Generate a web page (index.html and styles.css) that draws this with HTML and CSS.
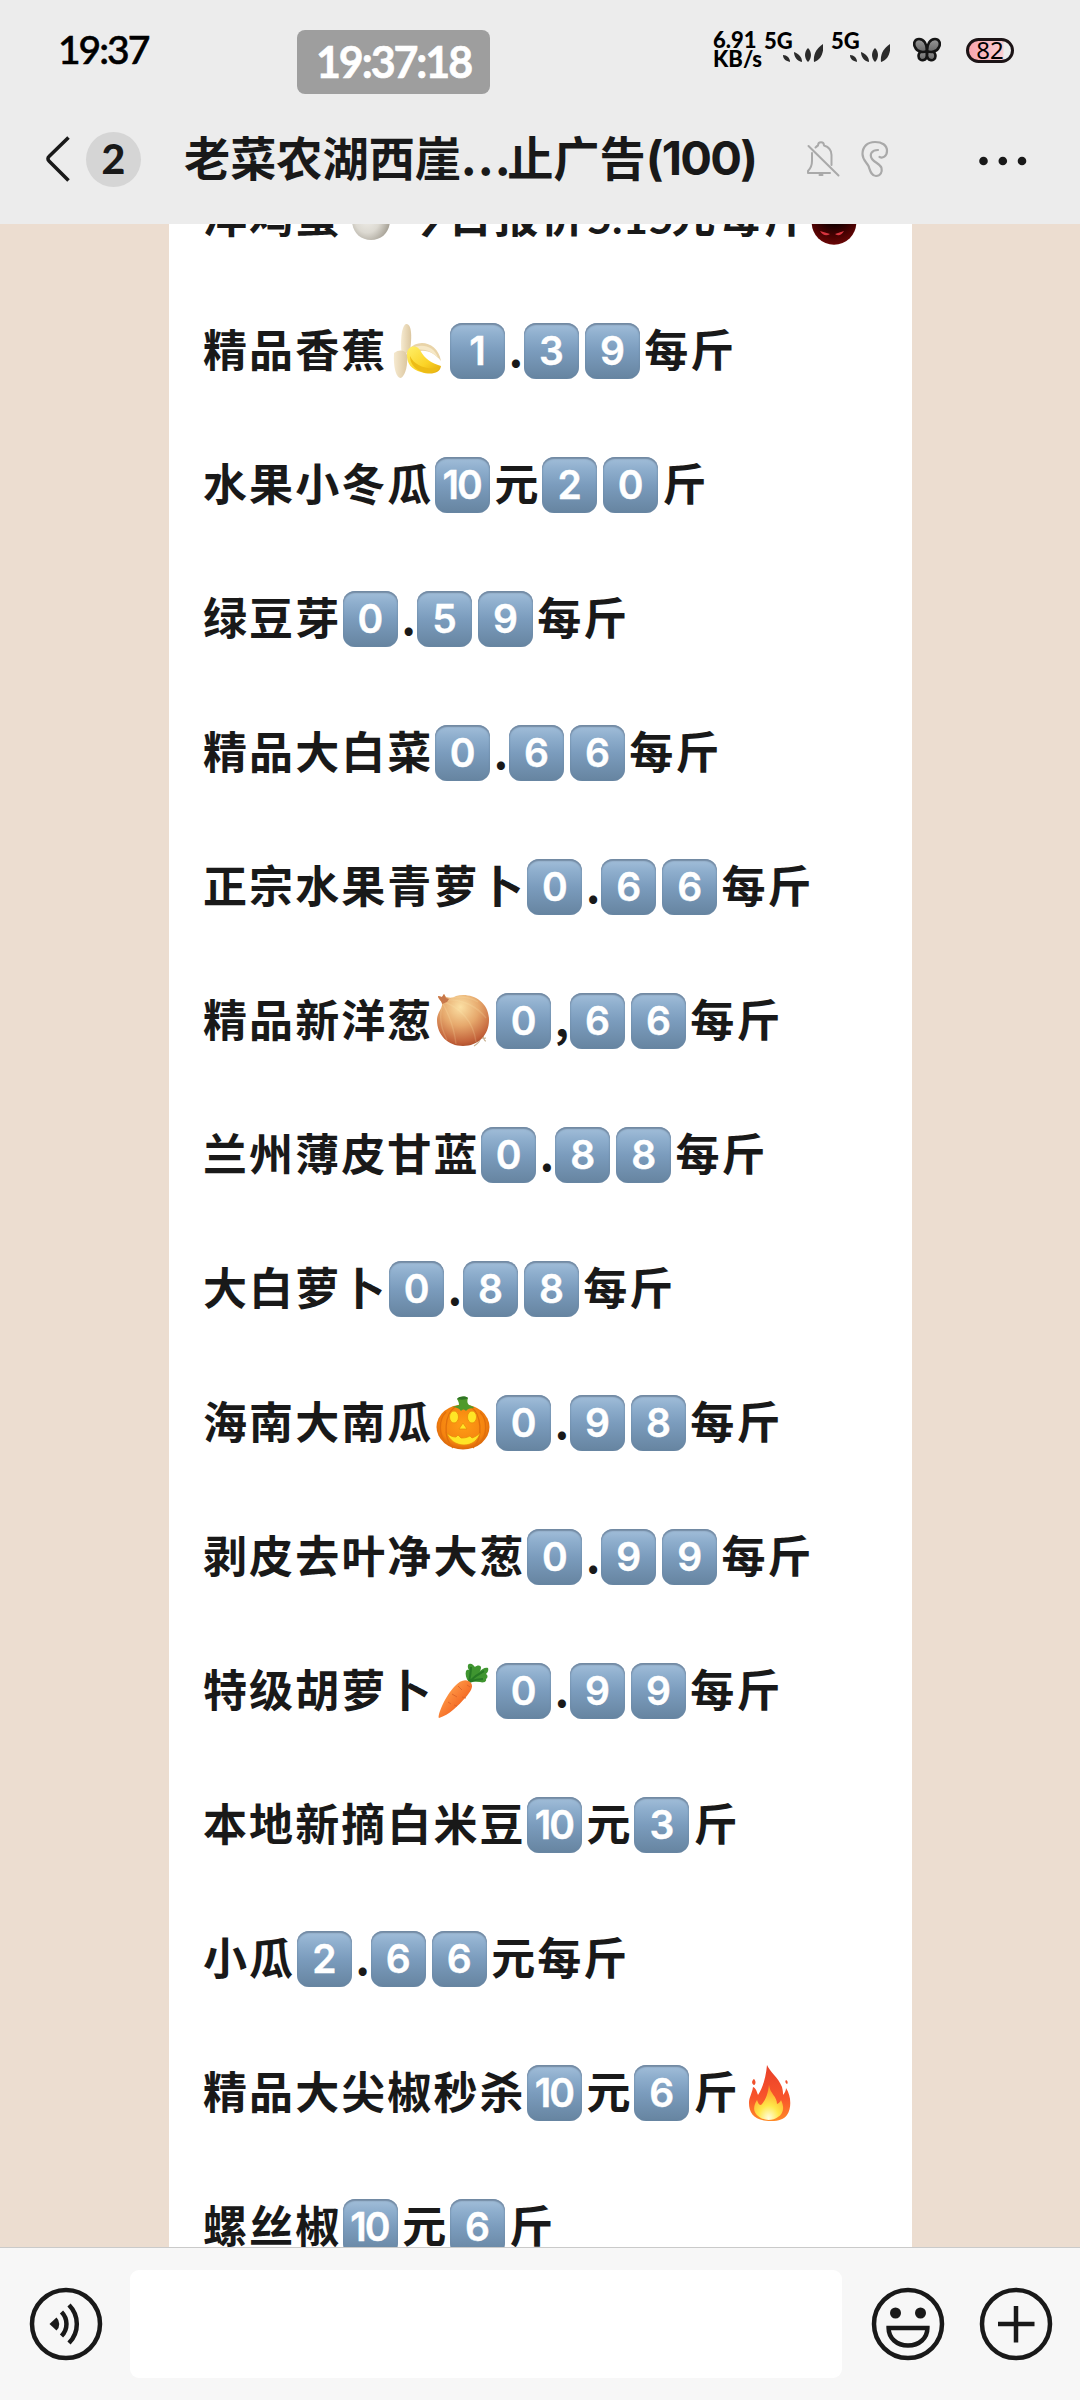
FILE: index.html
```html
<!DOCTYPE html>
<html lang="zh-CN">
<head>
    <meta charset="UTF-8">
    <meta name="viewport" content="width=device-width, initial-scale=1.0">
    <title>老菜农湖西崖</title>
    <link rel="stylesheet" href="styles.css">
</head>
<body>
    <!-- Shared shapes -->
    <svg class="defs" width="0" height="0">
        <defs>
            <linearGradient id="bananaFill" x1="0" y1="0" x2="1" y2="1">
                <stop offset="0" stop-color="#fff06a"/>
                <stop offset="0.6" stop-color="#fbd326"/>
                <stop offset="1" stop-color="#e0a70c"/>
            </linearGradient>
            <linearGradient id="peelFill" x1="0" y1="0" x2="1" y2="0">
                <stop offset="0" stop-color="#f6ead0"/>
                <stop offset="1" stop-color="#dcc7a0"/>
            </linearGradient>
            <radialGradient id="onionFill" cx="0.45" cy="0.25" r="0.8">
                <stop offset="0" stop-color="#fbe0a4"/>
                <stop offset="0.45" stop-color="#e6a86c"/>
                <stop offset="0.85" stop-color="#c3623a"/>
                <stop offset="1" stop-color="#a34826"/>
            </radialGradient>
            <radialGradient id="pumpkinFill" cx="0.5" cy="0.45" r="0.6">
                <stop offset="0" stop-color="#ff9d15"/>
                <stop offset="0.7" stop-color="#f58410"/>
                <stop offset="1" stop-color="#cf5a08"/>
            </radialGradient>
            <linearGradient id="carrotFill" x1="0" y1="0" x2="1" y2="1">
                <stop offset="0.2" stop-color="#ffa04c"/>
                <stop offset="0.6" stop-color="#f6712a"/>
                <stop offset="1" stop-color="#dc4f12"/>
            </linearGradient>
            <linearGradient id="fireFill" x1="0" y1="0" x2="0" y2="1">
                <stop offset="0" stop-color="#e8402a"/>
                <stop offset="0.6" stop-color="#f9552b"/>
                <stop offset="1" stop-color="#ff8a26"/>
            </linearGradient>
            <radialGradient id="flameFill" cx="0.5" cy="0.95" r="0.8">
                <stop offset="0" stop-color="#fffde0"/>
                <stop offset="0.45" stop-color="#ffe84a"/>
                <stop offset="1" stop-color="#ffa52c"/>
            </radialGradient>
            <radialGradient id="eggFill" cx="0.4" cy="0.5" r="0.6">
                <stop offset="0" stop-color="#f4f2ee"/>
                <stop offset="0.6" stop-color="#dcd9d1"/>
                <stop offset="1" stop-color="#aaa59a"/>
            </radialGradient>
            <radialGradient id="devilFill" cx="0.5" cy="0.3" r="0.7">
                <stop offset="0.3" stop-color="#120000"/>
                <stop offset="0.75" stop-color="#4c0202"/>
                <stop offset="1" stop-color="#6b0606"/>
            </radialGradient>
            <linearGradient id="wingFill" x1="0" y1="0" x2="0" y2="1">
                <stop offset="0" stop-color="#999999"/>
                <stop offset="1" stop-color="#666666"/>
            </linearGradient>
            <symbol id="leaves" viewBox="0 0 40 18">
                <g fill="#2b2b2b">
                    <path d="M0 11c4 0 7 3 7 7-4-1-7-3-7-7z"/>
                    <path d="M11 8c5 2 8 5 8 10-5-1-8-5-8-10z"/>
                    <path d="M25 4c4 4 4 10 0 14-4-4-4-10 0-14z"/>
                    <path d="M40 0c1 9-2 16-9 18-1-8 3-14 9-18z"/>
                </g>
            </symbol>
        </defs>
    </svg>

    <header class="header">
        <div class="status">
            <span class="status-time">19:37</span>
            <span class="clock">19:37:18</span>
            <div class="status-right">
                <div class="speed"><span>6.91</span><span>KB/s</span></div>
                <div class="signal"><span>5G</span><svg class="leaves" width="40" height="18"><use href="#leaves"/></svg></div>
                <div class="signal"><span>5G</span><svg class="leaves" width="40" height="18"><use href="#leaves"/></svg></div>
                <svg class="butterfly" width="28" height="25" viewBox="0 0 28 25">
                    <g fill="url(#wingFill)" stroke="#151515" stroke-width="2.6" stroke-linejoin="round">
                        <path d="M13.500 13c-4 0-8 2-8 6 0 3 3 5 5 4 2 0 3-2 3.500-4z"/>
                        <path d="M14.500 13c4 0 8 2 8 6 0 3-3 5-5 4-2 0-3-2-3.500-4z"/>
                        <path d="M14 14c0-7-3-12-8-12-4 0-6 4-4 8 2 5 8 6 12 4z"/>
                        <path d="M14 14c0-7 3-12 8-12 4 0 6 4 4 8-2 5-8 6-12 4z"/>
                    </g>
                </svg>
                <div class="battery">82</div>
            </div>
        </div>
        <div class="titlebar">
            <svg class="back" width="26" height="48" viewBox="0 0 26 48">
                <path d="M23.500 2.500L4 21.500a3 3 0 0 0 0 4.500L23.500 45.500" fill="none" stroke="#191919" stroke-width="3.600"/>
            </svg>
            <span class="unread">2</span>
            <h1 class="title">老菜农湖西崖<span class="dots">...</span>止广告<span class="count">(100)</span></h1>
            <svg class="bell" width="34" height="38" viewBox="0 0 34 38">
                <g fill="none" stroke="#a9a9a9" stroke-width="2" stroke-linecap="round" stroke-linejoin="round">
                    <path d="M6 13v8c0 5-1 7-4 10v2h22"/>
                    <path d="M9.500 7.500C11 6 11 6 12 5.500 12 1 18 1 18 5.500c5 1.500 7.500 5 7.500 9.500v10"/>
                    <path d="M2.500 6L32.500 35.500"/>
                    <path d="M13.500 35h3"/>
                </g>
            </svg>
            <svg class="ear" width="28" height="38" viewBox="0 0 28 38">
                <path d="M18.500 17c3 1.500 7.500-.5 7.500-6C26 5 21 2 14 2 6 2 1.500 7 1.500 14c0 6 4 8 6 12 1.500 4 2.500 10 7.500 10 4.500 0 6.500-4 5.500-8C19.500 24 14 23 11 19c-3-5 0-9 6-9" fill="none" stroke="#a9a9a9" stroke-width="2.200" stroke-linecap="round"/>
            </svg>
            <svg class="more" width="48" height="10" viewBox="0 0 48 10">
                <g fill="#191919"><circle cx="4.500" cy="5" r="4.300"/><circle cx="23.800" cy="5" r="4.300"/><circle cx="43" cy="5" r="4.300"/></g>
            </svg>
        </div>
    </header>

    <main class="chat">
        <div class="sheet">
            <p class="line"><span>洋鸡蛋</span><svg class="emoji" viewBox="0 0 61 56"><path d="M30 0c11 0 19 17 19 31 0 12-8 20-19 20S11 43 11 31C11 17 19 0 30 0z" fill="url(#eggFill)"/></svg><span>今日报价</span><span class="num">5.15</span><span>元每斤</span><svg class="emoji devil" viewBox="0 0 61 56"><circle cx="30" cy="33.500" r="22.300" fill="url(#devilFill)"/><path d="M16 42l10 3c-3 2-7 2-10-3zM40 42l-9 3c3 2 6 2 9-3z" fill="#d8353f"/></svg></p>
            <p class="line"><span>精品香蕉</span><svg class="emoji" viewBox="0 0 61 56"><path d="M15 33c-2-12-1-30 4-32 6-1 6 14 4 27z" fill="url(#peelFill)"/><path d="M22 26c9-11 29-7 32 12-7-9-17-13-28-8z" fill="#e9d4a8"/><path d="M26 25c9-5 22-1 25 10-6-7-14-10-23-8z" fill="#f6e8c6"/><path d="M20 31c0-8 9-10 13-4 5 9 11 13 21 16-1 8-11 9-20 6-9-2-15-9-14-18z" fill="url(#bananaFill)"/><path d="M23 33c4 9 15 14 29 12-3 6-12 6-19 3-6-3-10-8-10-15z" fill="#edbc16"/><path d="M7 30c5-4 12-3 13 2 1 8-1 20-6 23-4 1-8-9-7-25z" fill="url(#peelFill)"/></svg><span class="key">1</span><span class="dot">.</span><span class="key">3</span><span class="key">9</span><span>每斤</span></p>
            <p class="line"><span>水果小冬瓜</span><span class="key ten">10</span><span>元</span><span class="key">2</span><span class="key">0</span><span>斤</span></p>
            <p class="line"><span>绿豆芽</span><span class="key">0</span><span class="dot">.</span><span class="key">5</span><span class="key">9</span><span>每斤</span></p>
            <p class="line"><span>精品大白菜</span><span class="key">0</span><span class="dot">.</span><span class="key">6</span><span class="key">6</span><span>每斤</span></p>
            <p class="line"><span>正宗水果青萝卜</span><span class="key">0</span><span class="dot">.</span><span class="key">6</span><span class="key">6</span><span>每斤</span></p>
            <p class="line"><span>精品新洋葱</span><svg class="emoji" viewBox="0 0 61 56"><path d="M50 43c1 3 1 5 3 5M47 46c0 3-3 5-6 7M49 45c2 1 3 0 4 0" fill="none" stroke="#c9b294" stroke-width="1.200"/><path d="M9 10C8 7 5 6 5 3l4 1 2-3 2 3c4 1 7 1 10-1 15-4 33 5 33 24 0 15-11 26-26 26S4 42 4 27C4 19 10 15 9 10z" fill="url(#onionFill)"/><path d="M11 9c12 4 29 16 32 40M10 11c5 9 11 23 13 40M14 7c13-1 29 5 39 18M9 14C6 24 8 35 14 47M18 5c10-2 19-1 27 4" fill="none" stroke="#fff0b8" stroke-opacity=".18" stroke-width="1.400"/><path d="M5 3l4 1 2-3 2 4 3 1-2 3-5 2C9 8 6 7 5 3z" fill="#c7774a"/></svg><span class="key">0</span><span class="dot">,</span><span class="key">6</span><span class="key">6</span><span>每斤</span></p>
            <p class="line"><span>兰州薄皮甘蓝</span><span class="key">0</span><span class="dot">.</span><span class="key">8</span><span class="key">8</span><span>每斤</span></p>
            <p class="line"><span>大白萝卜</span><span class="key">0</span><span class="dot">.</span><span class="key">8</span><span class="key">8</span><span>每斤</span></p>
            <p class="line"><span>海南大南瓜</span><svg class="emoji" viewBox="0 0 61 56"><ellipse cx="30" cy="32" rx="26.500" ry="22.500" fill="url(#pumpkinFill)"/><path d="M22 12C12 19 9 42 20 53M38 12c10 7 13 30 2 41M13 17C5 25 6 41 13 48M47 17c8 8 7 24 0 31" fill="none" stroke="#e06f0c" stroke-width="1.300"/><path d="M19 12c3-1 5-1 7-2 0-3-1-4-2-6 3-3 8-3 11-1-1 3-1 5 1 7 2 1 4 1 5 3-4 0-7 1-8 3-2-2-3-2-5 0-2-3-5-4-9-4z" fill="#4f9a2b"/><path d="M24 4c3-3 8-3 11-1-2 2-8 2-11 1z" fill="#2f7424"/><g fill="#ffe526" stroke="#e88b0a" stroke-width=".8"><ellipse cx="21" cy="22" rx="4.500" ry="6"/><ellipse cx="39" cy="22" rx="4.500" ry="6"/><path d="M30 28l4 6h-8z"/><path d="M14 38c3 3 6 4 9 4l2-2 3 3c5 0 7-1 9-2l2 2c3-1 6-3 8-5-2 7-8 12-16 12S16 45 14 38z"/></g></svg><span class="key">0</span><span class="dot">.</span><span class="key">9</span><span class="key">8</span><span>每斤</span></p>
            <p class="line"><span>剥皮去叶净大葱</span><span class="key">0</span><span class="dot">.</span><span class="key">9</span><span class="key">9</span><span>每斤</span></p>
            <p class="line"><span>特级胡萝卜</span><svg class="emoji" viewBox="0 0 61 56"><path d="M36 19c-3-3-4-8-3-11 1-2 3-1 3-1-2-3-1-6 0-6 3-1 4 1 6 3 2-2 5-2 6 0 0 3-1 4-2 5 3-3 6-5 9-4 1 3-1 5-2 6 2 1 2 4 0 5 1 3-3 4-6 3-4 0-8-1-11 0z" fill="#3f9530"/><path d="M36 19c1-6 2-10 2-15M36 19c4-4 9-8 15-11M36 19c5-2 10-3 14-3" stroke="#277a25" stroke-width="2" fill="none"/><path d="M22 23c5-6 12-8 16-3 3 4-1 9-5 14-8 9-17 18-27 21-2-2 6-22 16-32z" fill="url(#carrotFill)"/><path d="M25 23l4 4M34 22l3 2M19 31l5 3M29 34l4 1M15 39l3 2M21 42l3 1" stroke="#e0662a" stroke-width="1"/></svg><span class="key">0</span><span class="dot">.</span><span class="key">9</span><span class="key">9</span><span>每斤</span></p>
            <p class="line"><span>本地新摘白米豆</span><span class="key ten">10</span><span>元</span><span class="key">3</span><span>斤</span></p>
            <p class="line"><span>小瓜</span><span class="key">2</span><span class="dot">.</span><span class="key">6</span><span class="key">6</span><span>元每斤</span></p>
            <p class="line"><span>精品大尖椒秒杀</span><span class="key ten">10</span><span>元</span><span class="key">6</span><span>斤</span><svg class="emoji" viewBox="0 0 61 56"><path d="M28 0c3 7 11 12 15 22 1 4 1 6 1 8 2-2 3-5 3-7 5 7 6 20 1 27-3 4-8 6-16 6-16 0-22-7-22-18 0-6 3-9 4-16 3 1 4 5 5 8 5-8 8-18 9-30z" fill="url(#fireFill)"/><path d="M15 14c2 2 2 5 0 6-3-1-2-5 0-6zM47 15c2 1 2 3 1 4-2-1-2-3-1-4z" fill="#f0502b"/><path d="M30 20c1 9 8 11 8 19 3-1 4-4 4-4 4 8 2 14-3 17-5 4-15 4-20-1-6-5-4-11-1-16 1 3 2 5 4 5 5-5 7-12 8-20z" fill="url(#flameFill)"/></svg></p>
            <p class="line"><span>螺丝椒</span><span class="key ten">10</span><span>元</span><span class="key">6</span><span>斤</span></p>
        </div>
    </main>

    <footer class="inputbar">
        <svg class="voice" width="74" height="74" viewBox="0 0 74 74">
            <g fill="none" stroke="#191919" stroke-width="4.500">
                <circle cx="37" cy="37" r="34"/>
                <path d="M32.500 25a17 17 0 0 1 0 24M40 18a27 27 0 0 1 0 38"/>
            </g>
            <path d="M20.500 37l7-6.500a9 9 0 0 1 0 13z" fill="#191919"/>
        </svg>
        <div class="field"></div>
        <svg class="smile" width="74" height="74" viewBox="0 0 74 74">
            <g fill="none" stroke="#191919" stroke-width="4.500">
                <circle cx="37" cy="37" r="34"/>
                <path d="M17.600 41h38.800c0 10-8 17.500-19.400 17.500S17.600 51 17.600 41z"/>
            </g>
            <circle cx="24.500" cy="26" r="5.500" fill="#191919"/>
            <circle cx="49.500" cy="26" r="5.500" fill="#191919"/>
        </svg>
        <svg class="plus" width="74" height="74" viewBox="0 0 74 74">
            <g fill="none" stroke="#191919" stroke-width="4.500">
                <circle cx="37" cy="37" r="34"/>
                <path d="M37 19v36.500M19 37h36.500"/>
            </g>
        </svg>
    </footer>
</body>
</html>
```
FILE: styles.css
```css
* {
    box-sizing: border-box;
}
body {
    margin: 0;
    width: 1080px;
    height: 2400px;
    display: flex;
    flex-direction: column;
    overflow: hidden;
    background-color: #ecddd0;
    color: #191919;
    font-family: "Noto Sans CJK SC", sans-serif;
}
svg {
    display: block;
    flex: none;
}
.defs {
    position: absolute;
}

/* Header */
.header {
    height: 224px;
    flex: none;
    background-color: #ececec;
    position: relative;
    z-index: 1;
}
.status {
    display: flex;
    height: 100px;
    color: #000;
    font-family: Lato, sans-serif;
    white-space: nowrap;
}
.status-time {
    width: 239px;
    margin-left: 58px;
    padding-top: 25px;
    font-size: 39px;
    line-height: 48px;
    font-weight: 500;
    letter-spacing: -2px;
    -webkit-text-stroke: 0.6px #000;
}
.clock {
    width: 193px;
    height: 64px;
    margin-top: 30px;
    border-radius: 8px;
    background-color: #9e9e9e;
    color: #fff;
    font-size: 43px;
    font-weight: 700;
    line-height: 63px;
    letter-spacing: -2.100px;
    text-align: center;
    -webkit-text-stroke: 0.6px #fff;
}
.status-right {
    display: flex;
    margin-left: 223px;
    padding-top: 30px;
    font-weight: 900;
}
.speed {
    width: 51px;
    display: flex;
    flex-direction: column;
    font-size: 22px;
    line-height: 19px;
}
.signal {
    width: 67px;
    font-size: 22px;
    line-height: 21px;
}
.leaves {
    margin: -7px 0 0 19px;
}
.butterfly {
    margin: 7px 0 0 15px;
}
.battery {
    width: 48px;
    height: 25px;
    margin: 8px 0 0 25px;
    border: 3px solid #1c1416;
    border-radius: 13px;
    background: linear-gradient(90deg, #f9a5ae, #f9cdd1 80%, #ececec 84%);
    font-family: "Noto Sans", sans-serif;
    font-size: 24px;
    font-weight: 400;
    line-height: 18px;
    text-align: center;
}
.titlebar {
    display: flex;
    align-items: center;
    height: 118px;
    padding-left: 45px;
}
.unread {
    width: 55px;
    height: 55px;
    margin-left: 15px;
    border-radius: 50%;
    background-color: #d5d5d5;
    font-family: Lato, sans-serif;
    font-size: 41px;
    font-weight: 900;
    line-height: 54px;
    text-align: center;
}
.title {
    display: flex;
    align-items: center;
    width: 580px;
    margin: 0 0 6px 43px;
    font-size: 46.200px;
    font-weight: 700;
    line-height: 60px;
    white-space: nowrap;
}
.dots {
    width: 46px;
    padding-bottom: 3px;
    text-align: center;
    letter-spacing: 2px;
}
.count {
    padding-top: 3px;
    font-family: Inter, sans-serif;
    font-size: 47px;
    letter-spacing: -1.700px;
}
.bell {
    margin-left: 42px;
}
.ear {
    margin-left: 21px;
}
.more {
    margin: 4px 0 0 90px;
}

/* Message text */
.chat {
    flex: 1;
    min-height: 0;
    overflow: hidden;
}
.sheet {
    width: 743px;
    height: 2023px;
    margin-left: 169px;
    background-color: #fff;
    display: flex;
    flex-direction: column;
}
.line {
    display: flex;
    align-items: center;
    flex: none;
    height: 134px;
    margin: 0;
    padding-left: 34px;
    font-size: 44px;
    font-weight: 700;
    letter-spacing: 2.080px;
    line-height: 64px;
    white-space: nowrap;
}
.line:first-child {
    margin-top: -74px;
}
.line span {
    flex: none;
    padding-bottom: 6px;
}
.line .dot {
    width: 13px;
    letter-spacing: 0;
    display: flex;
    justify-content: center;
}
.line .num {
    width: 85px;
    padding: 0;
    font-family: Lato, sans-serif;
    font-size: 44px;
    letter-spacing: 0;
    text-align: center;
}
.emoji {
    width: 61px;
    height: 56px;
    margin-left: -0.500px;
    margin-right: 0.500px;
}
.devil {
    margin-left: -6px;
}
.line .key {
    width: 55px;
    height: 56px;
    margin: 0 4.300px 0 1.700px;
    padding: 0;
    border-radius: 12px;
    background: linear-gradient(#a3bfda, #8eaecd 22%, #7b9cbd 50%, #6684a0);
    box-shadow: inset 0 2px 1.500px #7289a2, inset 0 0 2px #6d8aa8;
    color: #fff;
    font-family: Inter, sans-serif;
    font-size: 39px;
    font-weight: 600;
    letter-spacing: 0;
    line-height: 56px;
    text-align: center;
    -webkit-text-stroke: 0.400px #fff;
}
.line .ten {
    letter-spacing: -2px;
    text-indent: -2px;
}

/* Bottom bar */
.inputbar {
    display: flex;
    align-items: center;
    flex: none;
    height: 153px;
    padding: 0 27.500px 0 28.500px;
    border-top: 1px solid #cacaca;
    background-color: #f7f7f7;
}
.field {
    width: 712px;
    height: 108px;
    margin-left: 27.500px;
    border-radius: 9px;
    background-color: #fff;
}
.smile {
    margin-left: 28.500px;
}
.plus {
    margin-left: 34px;
}
```
